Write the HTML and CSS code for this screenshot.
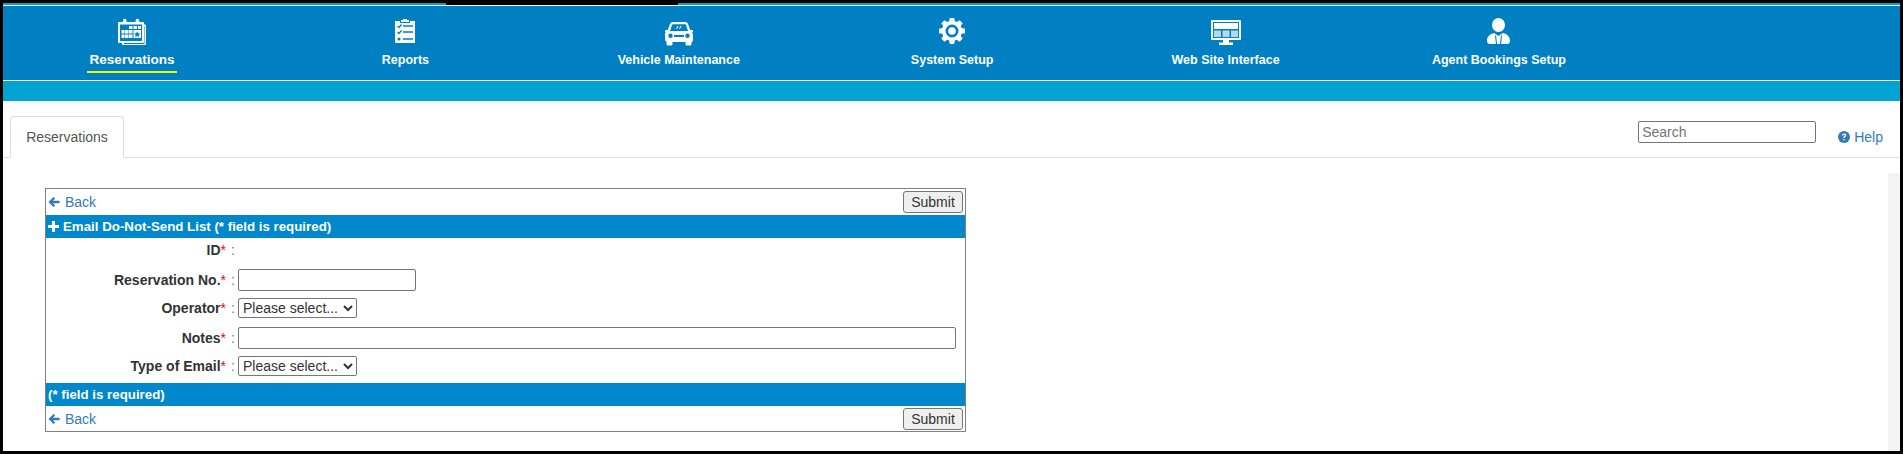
FILE: index.html
```html
<!DOCTYPE html>
<html lang="en">
<head>
<meta charset="utf-8">
<title>Email Do-Not-Send List</title>
<link rel="stylesheet" href="styles.css">
</head>
<body>
<div class="frame">
  <div class="topstrip"><span class="ts1"></span><span class="ts2"></span><span class="ts3"></span></div>
  <header class="nav">
    <a class="nav-item active"><svg class="ico" viewBox="1 0 28 28" width="28" height="28"><path fill="#fff" fill-rule="evenodd" d="M2 4h4V2.500a1.800 1.800 0 0 1 3.600 0V4h9V2.500a1.800 1.800 0 0 1 3.600 0V4H26a1 1 0 0 1 1 1v1.500h1a1 1 0 0 1 1 1V26a1 1 0 0 1-1 1H6a1 1 0 0 1-1-1v-1H2a1 1 0 0 1-1-1V5a1 1 0 0 1 1-1zm1 2.500V23h22V6.500zM7 26h20.500V8H27v16a1 1 0 0 1-1 1H7z"/><path fill="#fff" d="M12 8h3.500v3H12zM16.500 8H20v3h-3.500zM21 8h3v3h-3zM4.500 12h3v3.500h-3zM8 12h3.500v3.500H8zM12 12h3.500v3.500H12zM4.500 16.500h3V20h-3zM8 16.500h3.500V20H8zM12 16.500h3.500V20H12zM16.500 12H24v8h-7.500z"/><path fill="#0080c3" d="M20.200 13.200l1 2.100 2.200.2-1.700 1.500.6 2.200-2.100-1.200-2.100 1.200.6-2.200-1.700-1.500 2.200-.2z"/></svg><span>Reservations</span></a>
    <a class="nav-item"><svg class="ico" viewBox="1 0 20 28" width="20" height="28"><path fill="#fff" d="M7 2h2V1h4v1h2v2H7zM1 3h5v2h10V3h5v22H1z"/><g fill="none" stroke="#0080c3" stroke-width="1.400"><path d="M3.500 8l1.500 1.500 2.500-3M3.500 14l1.500 1.500 2.500-3"/><path d="M9 8h10M9 14h10M9 21h10"/></g><circle cx="5" cy="21" r="1.500" fill="#0080c3"/></svg><span>Reports</span></a>
    <a class="nav-item"><svg class="ico" viewBox="0 -3 30 28" width="30" height="28"><path fill="#fff" fill-rule="evenodd" d="M9 1h12c1.500 0 2.500.8 3 2l2.200 6H28a1 1 0 0 1 1 1v.8l-.8.7c.5.800.8 1.500.8 2.500v5c0 1-.6 1.700-1.500 2V23a1.500 1.500 0 0 1-1.500 1.500h-3A1.500 1.500 0 0 1 21.500 23v-2h-13v2A1.500 1.500 0 0 1 7 24.500H4A1.500 1.500 0 0 1 2.500 23v-2.500C1.600 20.200 1 19.500 1 18.500v-5c0-1 .3-1.700.8-2.500L1 10.800V10a1 1 0 0 1 1-1h1.800L6 3c.5-1.200 1.500-2 3-2zM9 3.200c-.5 0-.8.300-1 .8L6 10h18l-2-6c-.2-.5-.5-.8-1-.8zM6.500 12.500a2.200 2.200 0 1 0 0 4.400 2.200 2.200 0 0 0 0-4.400zm17 0a2.200 2.200 0 1 0 0 4.400 2.200 2.200 0 0 0 0-4.400zM10 14v2h10v-2z"/><path d="M14 5l-1.500 3M17 5l-1.500 3" stroke="#fff" stroke-width="1" fill="none"/></svg><span>Vehicle Maintenance</span></a>
    <a class="nav-item"><svg class="ico" viewBox="0 0 26 28" width="26" height="28"><path fill="#fff" fill-rule="evenodd" d="M10.800 0h4.400l.6 3.300 2 .8 2.800-1.900 3.100 3.100-1.900 2.800.8 2 3.400.7v4.400l-3.400.6-.8 2 1.900 2.800-3.100 3.100-2.800-1.900-2 .8-.6 3.400h-4.400l-.6-3.400-2-.8-2.800 1.900-3.100-3.100 1.900-2.800-.8-2L0 15.200v-4.400l3.400-.7.800-2-1.900-2.800 3.100-3.100 2.800 1.900 2-.8zM13 6.500a6.500 6.500 0 1 0 0 13 6.500 6.500 0 0 0 0-13z"/><circle cx="13" cy="13" r="3.800" fill="#fff"/></svg><span>System Setup</span></a>
    <a class="nav-item"><svg class="ico" viewBox="0 0 30 28" width="30" height="28"><path fill="#fff" fill-rule="evenodd" d="M1 2h28a1 1 0 0 1 1 1v18a1 1 0 0 1-1 1H18v2.500h4V27H8v-2.500h4V22H1a1 1 0 0 1-1-1V3a1 1 0 0 1 1-1zm1 2v16h26V4z"/><path fill="#fff" d="M3 5h24v6H3z"/><path fill="#fff" fill-opacity=".7" d="M3 12.500h7V19H3zM11.500 12.500h7V19h-7zM20 12.500h7V19h-7z"/></svg><span>Web Site Interface</span></a>
    <a class="nav-item"><svg class="ico" viewBox="0 0 23 28" width="23" height="28"><ellipse cx="11.500" cy="7" rx="6.500" ry="7" fill="#fff"/><path fill="#fff" d="M0 22.500c0-4 3-6.500 7-7.500l4.500 3 4.500-3c4 1 7 3.500 7 7.500 0 2.500-1 3.500-3 3.500H3c-2 0-3-1-3-3.500z"/><path fill="none" stroke="#0080c3" stroke-width="1.100" d="M8.500 17.500l1 8.500M14.500 17.500l-1 8.500"/></svg><span>Agent Bookings Setup</span></a>
  </header>
  <div class="subbar"></div>
  <div class="tabs">
    <div class="tab">Reservations</div>
    <div class="tab-tools">
      <input class="search" type="text" placeholder="Search">
      <a class="help"><svg viewBox="0 0 14 14" width="12" height="12"><circle cx="7" cy="7" r="7" fill="#337ab7"/><path d="M4.700 5.300C4.800 3.900 5.800 3 7.200 3c1.400 0 2.400.9 2.400 2.100 0 1-.6 1.500-1.300 2-.5.300-.7.600-.7 1.200H6.200c0-1 .3-1.600 1-2.100.5-.4.900-.6.900-1.100 0-.5-.4-.8-.9-.8-.6 0-1 .4-1.100 1zM6.200 9.300h1.500v1.500H6.200z" fill="#fff"/></svg> Help</a>
    </div>
  </div>
  <div class="main">
    <div class="content">
      <form class="panel">
        <div class="actions">
          <a class="back"><svg viewBox="0 0 13 12" width="12" height="12"><path fill="#337ab7" d="M6 .5l1.800 1.800-2.400 2.400h7.100v2.600H5.400l2.400 2.400L6 11.500.5 6z"/></svg> Back</a>
          <button class="submit" type="button">Submit</button>
        </div>
        <div class="band"><svg viewBox="0 0 11 11" width="11" height="11"><path fill="#fff" d="M4 0h3v4h4v3H7v4H4V7H0V4h4z"/></svg> Email Do-Not-Send List (* field is required)</div>
        <div class="fields">
          <div class="row r-id"><label class="lab">ID<i>*</i></label><span class="colon">:</span></div>
          <div class="row"><label class="lab">Reservation No.<i>*</i></label><span class="colon">:</span><input class="inp short" type="text"></div>
          <div class="row"><label class="lab">Operator<i>*</i></label><span class="colon">:</span><select class="sel"><option>Please select...</option></select></div>
          <div class="row r-notes"><label class="lab">Notes<i>*</i></label><span class="colon">:</span><input class="inp wide" type="text"></div>
          <div class="row"><label class="lab">Type of Email<i>*</i></label><span class="colon">:</span><select class="sel"><option>Please select...</option></select></div>
        </div>
        <div class="band">(* field is required)</div>
        <div class="actions bottom">
          <a class="back"><svg viewBox="0 0 13 12" width="12" height="12"><path fill="#337ab7" d="M6 .5l1.800 1.800-2.400 2.400h7.100v2.600H5.400l2.400 2.400L6 11.500.5 6z"/></svg> Back</a>
          <button class="submit" type="button">Submit</button>
        </div>
      </form>
    </div>
    <div class="track"></div>
  </div>
</div>
</body>
</html>
```

FILE: styles.css
```css
* { box-sizing: border-box; }
html, body { margin: 0; height: 100%; }
body { background: #000; font-family: "Liberation Sans", Arial, sans-serif; font-size: 14px; color: #333; overflow: hidden; }
.frame { height: 448px; width: 1897px; margin: 3px 3px 0; background: #fff; overflow: hidden; display: flex; flex-direction: column; }
.topstrip { display: flex; height: 2px; flex: none; }
.ts1 { width: 443px; background: #00a3d1; }
.ts2 { width: 232px; background: #000; }
.ts3 { flex: 1; background: #00a3d1; }
.nav { display: grid; grid-template-columns: repeat(6, 273.4px); height: 76px; flex: none; background: #0080c3; border-top: 1px solid #fff; border-bottom: 1px solid #fff; padding-left: 0; }
.nav-item { display: flex; flex-direction: column; align-items: center; color: #fff; font-weight: bold; font-size: 12.500px; line-height: 15px; white-space: nowrap; margin-left: -7.700px; margin-right: 7.700px; }
.nav-item span { margin-top: 1px; }
.ico { display: block; height: 28px; margin-top: 12px; margin-bottom: 6px; overflow: visible; flex: none; }
.active span { font-size: 13.500px; margin-top: 0; }
.active::after { content: ""; width: 90px; height: 2px; background: #f5f500; margin-top: 4px; }
.subbar { height: 20px; flex: none; background: #00a3d1; }
.tabs { height: 57px; flex: none; border-bottom: 1px solid #ddd; display: flex; justify-content: space-between; align-items: flex-start; padding-left: 7px; }
.tab { width: 114px; height: 42px; margin-top: 15px; border: 1px solid #ddd; border-bottom: 1px solid #fff; border-radius: 4px 4px 0 0; text-align: center; line-height: 40px; color: #555; font-size: 14px; background: #fff; }
.tab-tools { display: flex; align-items: flex-start; padding-right: 17px; }
.search { width: 178px; height: 22px; margin-top: 20px; border: 1px solid #767676; border-radius: 2px; padding: 1px 3px; font: 14px "Liberation Sans", Arial, sans-serif; }
.search::placeholder { color: #757575; opacity: 1; }
.help { margin: 28px 0 0 22px; color: #337ab7; font-size: 14px; line-height: 16px; white-space: nowrap; display: flex; align-items: center; gap: 4px; }
.main { flex: 1; display: flex; min-height: 0; }
.content { flex: 1; padding: 30px 0 0 42px; }
.track { width: 12px; margin-top: 15px; background: #f3f3f3; }
.panel { width: 921px; height: 244px; border: 1px solid #808080; display: flex; flex-direction: column; }
.actions { height: 26px; display: flex; justify-content: space-between; align-items: center; padding: 0 2px; flex: none; }
.back { color: #337ab7; font-size: 14px; display: flex; align-items: center; gap: 5px; }
.submit { width: 60px; height: 22px; padding: 0; border: 1px solid #767676; border-radius: 3px; background: #efefef; color: #333; font: 14px "Liberation Sans", Arial, sans-serif; }
.band { height: 23px; background: #0087cc; color: #fff; font-weight: bold; font-size: 13.300px; line-height: 22px; padding-left: 2px; flex: none; display: flex; align-items: center; gap: 4px; }
.fields { height: 145px; flex: none; display: flex; flex-direction: column; gap: 7px; }
.row { display: flex; align-items: center; }
.r-id { height: 24px; }
.r-notes { margin-top: 2px; }
.lab { width: 180px; text-align: right; font-weight: bold; font-size: 14px; }
.lab i { color: #f00; font-weight: normal; font-style: normal; }
.colon { width: 12px; padding-left: 5px; color: #777; font-size: 14px; }
.inp { height: 22px; border: 1px solid #767676; border-radius: 2px; background: #fff; padding: 1px 2px; }
.short { width: 178px; }
.wide { width: 718px; }
.sel { width: 119px; height: 20px; border: 1px solid #767676; border-radius: 2px; background: #fff; color: #333; font: 14px "Liberation Sans", Arial, sans-serif; padding: 0; }
.bottom { height: 25px; align-items: flex-start; padding-top: 2px; }
.bottom .back { height: 22px; }
```
